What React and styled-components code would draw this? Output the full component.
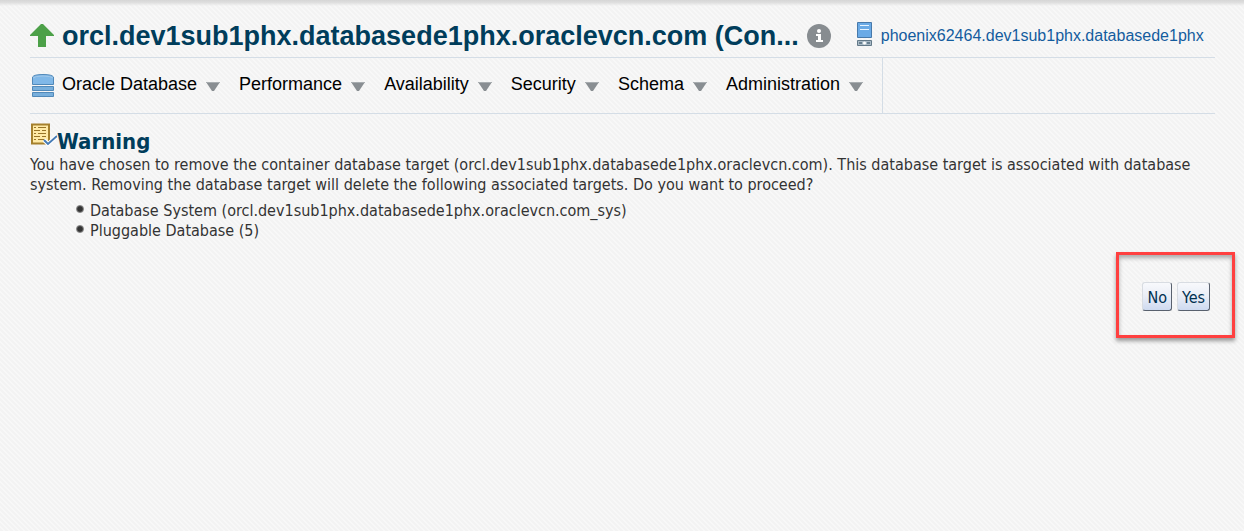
import React from "react";
import styled, { createGlobalStyle } from "styled-components";

const GlobalStyle = createGlobalStyle`
  * { box-sizing: border-box; }
  body {
    margin: 0;
    color: #333333;
    font-family: "DejaVu Sans Condensed", Tahoma, sans-serif;
    font-size: 16px;
    line-height: 20px;
    background-color: #f8f8f8;
    background-image: linear-gradient(45deg, #f3f3f3 25%, #f8f8f8 25% 50%, #f3f3f3 50% 75%, #f8f8f8 75%);
    background-size: 5px 5px;
  }
`;

const Page = styled.div`
  min-height: 100vh;
  padding: 0 29px 0 30px;
`;

const TopShade = styled.div`
  height: 6px;
  margin: 0 -29px 0 -30px;
  background: linear-gradient(#d6d6d6, #dedede 40%, transparent);
`;

const TargetHeader = styled.header`
  display: flex;
  align-items: center;
  height: 52px;
  padding-top: 8px;
  border-bottom: 1px solid #d4dde6;
  font-family: "Liberation Sans", Arial, sans-serif;
`;

const TargetTitle = styled.h1`
  margin: 0 8px;
  color: #003d5b;
  font-size: 27px;
  line-height: 32px;
  font-weight: 700;
  white-space: nowrap;
`;

const InfoButton = styled.button`
  display: flex;
  flex: none;
  padding: 0;
  border: 0;
  background: none;
`;

const HostLink = styled.a`
  display: flex;
  align-items: center;
  gap: 8px;
  margin-left: 25px;
  color: #145c9e;
  font-size: 16px;
  text-decoration: none;
  white-space: nowrap;
`;

const MenuBar = styled.nav`
  display: flex;
  height: 56px;
  border-bottom: 1px solid #d4dde6;
`;

const MenuList = styled.div`
  display: flex;
  align-items: center;
  gap: 19px;
  padding-right: 19px;
  border-right: 1px solid #d4dde6;
`;

const MenuButton = styled.button`
  display: flex;
  align-items: center;
  padding: 0;
  border: 0;
  background: none;
  color: #000000;
  font-family: "Liberation Sans", Arial, sans-serif;
  font-size: 18px;
  line-height: 24px;
  white-space: nowrap;
`;

const MenuLabel = styled.span`
  margin-right: 9px;
  padding-bottom: 3px;
`;

const Message = styled.main`
  padding-top: 8px;
`;

const Heading = styled.h2`
  display: flex;
  align-items: flex-start;
  height: 33px;
  margin: 0;
  color: #003d5b;
  font-size: 22px;
  line-height: 40px;
  font-weight: 700;
`;

const Text = styled.p`
  margin: 0;
`;

const TargetList = styled.ul`
  margin: 6px 0 0;
  padding: 0 0 0 46px;
  list-style: none;
`;

const TargetItem = styled.li`
  display: flex;
  gap: 6px;

  &::before {
    content: "";
    width: 8px;
    height: 8px;
    margin-top: 4px;
    border-radius: 50%;
    background: radial-gradient(circle, #333333 40%, #bbbbbb 75%);
  }
`;

const Actions = styled.div`
  display: flex;
  justify-content: flex-end;
  margin: 11px -20px 0 0;
`;

const Highlight = styled.div`
  display: flex;
  gap: 5px;
  padding: 27px 22px 24px 23px;
  border: 3px solid #ff4040;
  box-shadow: 0 3px 4px #999999, inset 0 3px 4px #aaaaaa;
`;

const ActionButton = styled.button`
  height: 29px;
  padding: 3px 4px 0;
  border: 1px solid;
  border-color: #d8dce2 #59616e #59616e #d8dce2;
  border-radius: 3px;
  background: linear-gradient(#f8f9fc, #e9edf6 50%, #cedaf0);
  color: #003050;
  font-family: inherit;
  font-size: 16px;
  line-height: 20px;
`;

const UpIcon = () => (
  <svg width="24" height="24" viewBox="0 0 24 24" aria-hidden="true">
    <path d="M12 -1 24 11V12H16V23H8V12H0V11Z" fill="#4ca048" />
  </svg>
);

const InfoIcon = () => (
  <svg width="24" height="24" viewBox="0 0 24 24" aria-hidden="true">
    <circle cx="12" cy="12" r="12" fill="#878c90" />
    <circle cx="12" cy="7" r="2" fill="#fff" />
    <path d="M9 10h5v6h2v2H9v-2h2v-4H9Z" fill="#fff" />
  </svg>
);

const HostIcon = () => (
  <svg width="17" height="30" viewBox="0 0 17 30" aria-hidden="true">
    <path d="M1.500 1.500h14v15h-14Z" fill="#6aaae6" stroke="#4779aa" />
    <path d="M4 4.500h9M4 8.500h9" stroke="#e7f4ff" />
    <path d="M1.500 19.500h14v5h-14Z" fill="#a9bac6" stroke="#637988" />
    <path d="M3 21h3v2H3Zm8 0h3v2h-3Z" fill="#687f8f" />
    <circle cx="8.500" cy="22" r="1.500" fill="#fff" />
  </svg>
);

const DatabaseIcon = () => (
  <svg width="32" height="24" viewBox="0 0 32 24" aria-hidden="true">
    <path d="M2.500 10.500V3Q4 .5 13 .5T23.500 3V10.500Z" fill="#80b8e8" stroke="#5189b9" />
    <path d="M3 4Q5 2 13 2T23 4" fill="none" stroke="#a1c8e9" />
    <path d="M2.500 12.500h21v4h-21Zm0 6h21v4h-21Z" fill="#78afdc" stroke="#5189b9" />
  </svg>
);

const ArrowIcon = () => (
  <svg width="14" height="10" viewBox="0 0 14 10" aria-hidden="true">
    <path d="M0 1h14L8 10H6Z" fill="#898e92" />
    <path d="M0 1.500h14" stroke="#a8adb0" />
  </svg>
);

const WarningIcon = () => (
  <svg width="27" height="26" viewBox="0 0 27 26" aria-hidden="true">
    <path d="M2 2.500h17v19H2Z" fill="#ffeaa6" stroke="#a5802d" strokeWidth="2" />
    <path d="M4 5.500h2m2 0h8M4 8.500h6m2 0h4M4 11.500h2m2 0h8M4 14.500h6m2 0h4M4 17.500h2m2 0h6" stroke="#987427" />
    <path d="M14 18 18 22 27 14" fill="none" stroke="#fff" strokeWidth="4" />
    <path d="M14 18 18 22 27 14" fill="none" stroke="#477cb6" strokeWidth="2" />
  </svg>
);

const menus = ["Oracle Database", "Performance", "Availability", "Security", "Schema", "Administration"];
const targets = [
  "Database System (orcl.dev1sub1phx.databasede1phx.oraclevcn.com_sys)",
  "Pluggable Database (5)",
];

export default function App() {
  return (
    <>
      <GlobalStyle />
      <Page>
        <TopShade />
        <TargetHeader>
          <UpIcon />
          <TargetTitle>orcl.dev1sub1phx.databasede1phx.oraclevcn.com (Con...</TargetTitle>
          <InfoButton type="button" aria-label="Target information">
            <InfoIcon />
          </InfoButton>
          <HostLink href="#host">
            <HostIcon />
            phoenix62464.dev1sub1phx.databasede1phx
          </HostLink>
        </TargetHeader>
        <MenuBar aria-label="Target menu">
          <MenuList>
            {menus.map((name, index) => (
              <MenuButton type="button" key={name}>
                {index === 0 && <DatabaseIcon />}
                <MenuLabel>{name}</MenuLabel>
                <ArrowIcon />
              </MenuButton>
            ))}
          </MenuList>
        </MenuBar>
        <Message>
          <Heading>
            <WarningIcon />
            Warning
          </Heading>
          <Text>
            You have chosen to remove the container database target
            (orcl.dev1sub1phx.databasede1phx.oraclevcn.com). This database target is associated with
            database system. Removing the database target will delete the following associated
            targets. Do you want to proceed?
          </Text>
          <TargetList>
            {targets.map((target) => (
              <TargetItem key={target}>{target}</TargetItem>
            ))}
          </TargetList>
          <Actions>
            <Highlight>
              <ActionButton type="button">No</ActionButton>
              <ActionButton type="button">Yes</ActionButton>
            </Highlight>
          </Actions>
        </Message>
      </Page>
    </>
  );
}
